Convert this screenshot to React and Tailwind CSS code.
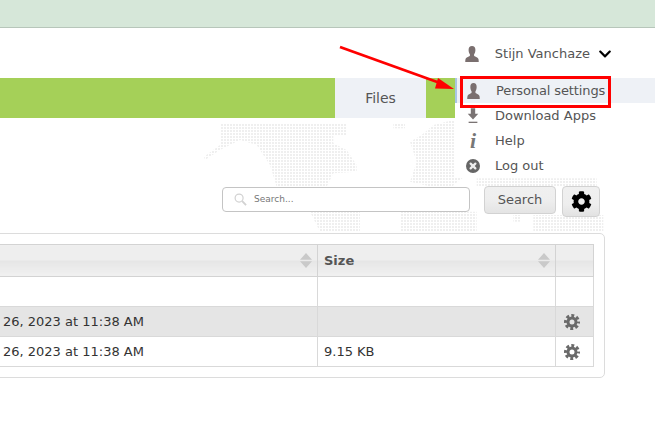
import React from "react";
import { FaCog, FaChevronDown } from "react-icons/fa";

function Person({ className }) {
  return (
    <svg viewBox="0 0 16 16" preserveAspectRatio="none" className={className} fill="#7a6f6f">
      <path d="M8 0c2.600 0 3.900 1.700 3.900 3.900 0 1.700-.7 3.300-1.500 4.300v1.500c0 .8 4.200 1.200 4.900 3.200.3.800.4 1.600.4 3.100H.3c0-1.500.1-2.300.4-3.100.7-2 4.900-2.400 4.900-3.200V8.200c-.8-1-1.500-2.600-1.500-4.300C4.100 1.700 5.400 0 8 0z" />
    </svg>
  );
}

function DownloadIcon() {
  return (
    <svg viewBox="0 0 16 18" className="w-[14px] h-[16px]" fill="#7a7373">
      <path d="M5.500 0h5v6.500h3.500L8 13 2 6.500h3.500z" />
      <rect x="3" y="15.500" width="10" height="1.500" />
    </svg>
  );
}

function CloseCircle() {
  return (
    <svg viewBox="0 0 16 16" className="w-[14px] h-[14px]">
      <circle cx="8" cy="8" r="8" fill="#666" />
      <path d="M5.300 5.300l5.400 5.400M10.700 5.300l-5.400 5.400" stroke="#eee" strokeWidth="2.600" strokeLinecap="round" />
    </svg>
  );
}

function MenuRow({ icon, label, active }) {
  return (
    <div
      className={
        "flex h-[25px] items-center " +
        (active ? "bg-[#eef1f6] border-l-2 border-[#a9c6e2] pl-[8px]" : "pl-[10px]")
      }
    >
      <span className="flex w-[14px] ml-[1px] justify-center shrink-0">{icon}</span>
      <span className={(active ? "ml-[16px] tracking-[-0.12px]" : "ml-[15px]") + " text-[13px] text-[#555]"}>{label}</span>
    </div>
  );
}

function WorldMap() {
  const scale = (s) =>
    s
      .split(" ")
      .map((p) => {
        const [x, y] = p.split(",").map(Number);
        return `${x / 3},${y / 3}`;
      })
      .join(" ");
  const shapes = [
    "60,25 440,25 440,60 400,60 400,85 440,105 470,150 470,170 400,175 380,215 230,215 210,150 170,90 120,75 60,105 15,135 12,125 60,90",
    "580,25 615,25 615,40 580,40",
    "630,80 665,60 700,30 760,15 800,15 800,180 760,210 760,230 630,200 650,140",
    "330,290 480,290 480,350 360,350",
    "600,290 830,290 830,350 600,350",
    "830,190 1190,190 1190,215 830,215",
    "1000,300 1210,300 1210,350 1000,350",
    "940,300 960,300 960,320 940,320",
  ];
  return (
    <svg className="absolute left-[200px] top-[115px] w-[455px] h-[120px]" viewBox="0 0 455 120">
      <defs>
        <pattern id="dots" width="3" height="3" patternUnits="userSpaceOnUse">
          <rect width="2" height="2" fill="#efefef" />
        </pattern>
      </defs>
      {shapes.map((s, i) => (
        <polygon key={i} points={scale(s)} fill="url(#dots)" />
      ))}
    </svg>
  );
}

function SortIcon() {
  return (
    <svg viewBox="0 0 12 15" className="w-[12px] h-[15px] shrink-0" fill="#c9c9c9">
      <path d="M6 0l6 6.800H0zM6 15L0 8.200h12z" />
    </svg>
  );
}

const headCell =
  "border border-[#d3d3d3] h-[32px] p-0 font-bold text-[#555] bg-[linear-gradient(#eeeeee_0%,#eeeeee_48%,#e6e6e6_50%,#f1f1f1_100%)]";
const cell = "border border-[#d9d9d9] p-0 text-[#333]";

function RowGear() {
  return (
    <div className="flex justify-center pr-[6px]">
      <svg viewBox="0 0 16 16" className="w-[16px] h-[16px]" fill="none" stroke="#6a6a6a">
        <circle cx="8" cy="8" r="4" strokeWidth="3" />
        <circle cx="8" cy="8" r="6.500" strokeWidth="3" strokeDasharray="2.900 2.205" strokeDashoffset="1.450" />
      </svg>
    </div>
  );
}

export default function App() {
  return (
    <div
      className="relative w-[655px] h-[433px] overflow-hidden bg-white text-[13px]"
      style={{ fontFamily: '"DejaVu Sans", sans-serif' }}
    >
      <WorldMap />

      <div className="relative h-[28px] bg-[#d6e7d9] border-b border-[#b7c6ba]" />

      <div className="relative flex h-[50px] items-center justify-end pr-[43px] pt-[1px]">
        <Person className="w-[14px] h-[16px]" />
        <span className="ml-[16px] text-[#555]">Stijn Vanchaze</span>
        <FaChevronDown className="ml-[8px] w-[14px] h-[14px] text-black" />
      </div>

      <div className="relative flex h-[40px]">
        <div className="w-[335px] bg-[#a5d058]" />
        <div className="flex w-[91px] items-center justify-center bg-[#eef1f6] text-[14px] text-[#555]">Files</div>
        <div className="w-[29px] bg-[#a5d058]" />
      </div>

      <div className="relative flex justify-end items-start gap-[6px] pr-[55px] mt-[68px]">
        <div className="flex h-[25px] w-[248px] mt-[1px] mr-[8px] items-center rounded-[4px] border border-[#c4c4c4] bg-white pl-[11px]">
          <svg viewBox="0 0 14 14" className="w-[13px] h-[13px]" fill="none" stroke="#d2d2d2">
            <circle cx="5.500" cy="5.500" r="4.300" strokeWidth="1.300" />
            <path d="M8.800 8.800l4.200 4.200" strokeWidth="2" />
          </svg>
          <span className="ml-[7px] text-[9px] text-[#777]">Search...</span>
        </div>
        <div className="flex h-[28px] w-[72px] items-center justify-center rounded-[4px] border border-[#d2d2d2] text-[#555] bg-[linear-gradient(#f0f0f0_0%,#eeeeee_50%,#e4e4e4_100%)]">
          Search
        </div>
        <div className="flex h-[31px] w-[38px] items-center justify-center rounded-[4px] border border-[#d2d2d2] bg-[linear-gradient(#f0f0f0_0%,#eeeeee_60%,#e2e2e2_100%)]">
          <FaCog className="w-[21px] h-[21px] text-black" />
        </div>
      </div>

      <div className="relative -ml-[20px] mt-[16px] w-[625px] h-[145px] rounded-[5px] border border-[#dcdcdc] bg-white p-[10px]">
        <table className="w-[602px] table-fixed border-collapse">
          <colgroup>
            <col className="w-[326px]" />
            <col className="w-[238px]" />
            <col className="w-[38px]" />
          </colgroup>
          <tbody>
            <tr>
              <td className={headCell}>
                <div className="flex justify-end pr-[5px]"><SortIcon /></div>
              </td>
              <td className={headCell}>
                <div className="flex items-center justify-between pl-[6px] pr-[5px]">
                  <span>Size</span>
                  <SortIcon />
                </div>
              </td>
              <td className={headCell} />
            </tr>
            <tr className="h-[30px]">
              <td className={cell} />
              <td className={cell} />
              <td className={cell} />
            </tr>
            <tr className="h-[30px] bg-[#e5e5e5]">
              <td className={cell}><span className="pl-[11px]">26, 2023 at 11:38 AM</span></td>
              <td className={cell} />
              <td className={cell}><RowGear /></td>
            </tr>
            <tr className="h-[30px]">
              <td className={cell}><span className="pl-[11px]">26, 2023 at 11:38 AM</span></td>
              <td className={cell}><span className="pl-[6px]">9.15 KB</span></td>
              <td className={cell}><RowGear /></td>
            </tr>
          </tbody>
        </table>
      </div>

      {/* dropdown menu over the page */}
      <div className="absolute left-[455px] top-[78px] w-[200px] h-[100px] bg-white">
        <MenuRow active icon={<Person className="w-[13px] h-[16px]" />} label="Personal settings" />
        <MenuRow icon={<DownloadIcon />} label="Download Apps" />
        <MenuRow
          icon={
            <span
              className="text-[22px] leading-none font-bold italic text-[#777]"
              style={{ fontFamily: '"Liberation Serif", serif' }}
            >
              i
            </span>
          }
          label="Help"
        />
        <MenuRow icon={<CloseCircle />} label="Log out" />
      </div>

      {/* annotations */}
      <div className="absolute left-[460px] top-[76px] w-[151px] h-[32px] border-[3px] border-[#ff0000]" />
      <svg className="absolute left-[335px] top-[40px] w-[125px] h-[60px]" viewBox="0 0 125 60">
        <path d="M5 7L105 43" stroke="#ff0000" strokeWidth="2.800" />
        <path d="M119 49L100 48.500L103 38z" fill="#ff0000" />
      </svg>
    </div>
  );
}
